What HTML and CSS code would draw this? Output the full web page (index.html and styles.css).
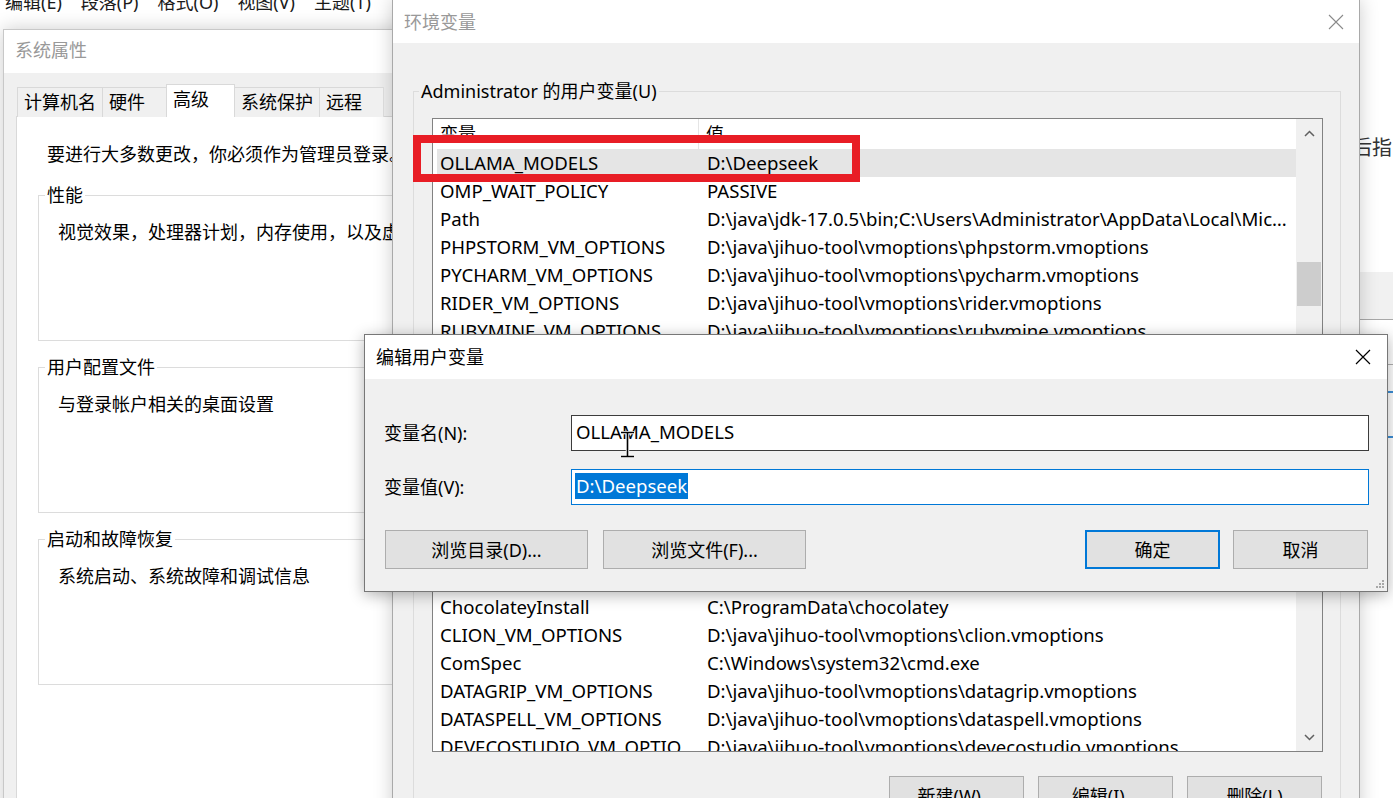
FILE: index.html
```
<!DOCTYPE html>
<html lang="zh-CN">

<head>
  <meta charset="UTF-8">
  <title>环境变量</title>
  <link rel="stylesheet" href="styles.css">
</head>

<body>
  <div class="desktop">

    <!-- editor app in the background -->
    <div class="menubar">
      <span>编辑(E)</span>
      <span>段落(P)</span>
      <span>格式(O)</span>
      <span>视图(V)</span>
      <span>主题(T)</span>
    </div>

    <div class="bg-app">
      <div class="bg-text">后指</div>
      <div class="bg-bar"></div>
      <div class="bg-line gray"></div>
      <div class="bg-line blue first"></div>
      <div class="bg-line blue"></div>
    </div>

    <!-- 系统属性 -->
    <div class="window sysprops">
      <div class="titlebar inactive"><span class="title">系统属性</span></div>
      <div class="sys-body">
        <div class="tabs">
          <div class="tab">计算机名</div>
          <div class="tab">硬件</div>
          <div class="tab active">高级</div>
          <div class="tab">系统保护</div>
          <div class="tab">远程</div>
        </div>
        <div class="tab-panel">
          <p class="note">要进行大多数更改，你必须作为管理员登录。</p>
          <fieldset class="sys-group">
            <legend>性能</legend>
            <p>视觉效果，处理器计划，内存使用，以及虚拟内存</p>
          </fieldset>
          <fieldset class="sys-group">
            <legend>用户配置文件</legend>
            <p>与登录帐户相关的桌面设置</p>
          </fieldset>
          <fieldset class="sys-group">
            <legend>启动和故障恢复</legend>
            <p>系统启动、系统故障和调试信息</p>
          </fieldset>
        </div>
      </div>
    </div>

    <!-- 环境变量 -->
    <div class="window envwin">
      <div class="titlebar inactive">
        <span class="title">环境变量</span>
        <span class="close"><svg width="16" height="16" viewBox="0 0 16 16"><path d="M1 1L15 15M15 1L1 15" stroke="currentColor" stroke-width="1.1" fill="none"/></svg></span>
      </div>
      <div class="env-body">
        <fieldset class="env-group">
          <legend>Administrator 的用户变量(U)</legend>
          <div class="listview user-list">
            <div class="list-main">
              <div class="list-head">
                <div class="hcell name">变量</div>
                <div class="hcell">值</div>
              </div>
              <div class="row selected"><span class="cell-name">OLLAMA_MODELS</span><span class="cell-value">D:\Deepseek</span></div>
              <div class="row"><span class="cell-name">OMP_WAIT_POLICY</span><span class="cell-value">PASSIVE</span></div>
              <div class="row"><span class="cell-name">Path</span><span class="cell-value">D:\java\jdk-17.0.5\bin;C:\Users\Administrator\AppData\Local\Microsoft\WindowsApps;</span></div>
              <div class="row"><span class="cell-name">PHPSTORM_VM_OPTIONS</span><span class="cell-value">D:\java\jihuo-tool\vmoptions\phpstorm.vmoptions</span></div>
              <div class="row"><span class="cell-name">PYCHARM_VM_OPTIONS</span><span class="cell-value">D:\java\jihuo-tool\vmoptions\pycharm.vmoptions</span></div>
              <div class="row"><span class="cell-name">RIDER_VM_OPTIONS</span><span class="cell-value">D:\java\jihuo-tool\vmoptions\rider.vmoptions</span></div>
              <div class="row"><span class="cell-name">RUBYMINE_VM_OPTIONS</span><span class="cell-value">D:\java\jihuo-tool\vmoptions\rubymine.vmoptions</span></div>
              <div class="row"><span class="cell-name">TEMP</span><span class="cell-value">%USERPROFILE%\AppData\Local\Temp</span></div>
            </div>
            <div class="vscroll">
              <div class="arrow"><svg width="11" height="7" viewBox="0 0 11 7"><path d="M1 6L5.5 1.5L10 6" stroke="#606060" stroke-width="1.5" fill="none"/></svg></div>
              <div class="thumb"></div>
              <div class="spacer"></div>
              <div class="arrow"><svg width="11" height="7" viewBox="0 0 11 7"><path d="M1 1L5.5 5.5L10 1" stroke="#606060" stroke-width="1.5" fill="none"/></svg></div>
            </div>
          </div>
          <div class="btn-row">
            <button class="btn">新建(N)...</button>
            <button class="btn">编辑(E)...</button>
            <button class="btn">删除(D)</button>
          </div>
        </fieldset>

        <fieldset class="env-group">
          <legend>系统变量(S)</legend>
          <div class="listview sys-list">
            <div class="list-main">
              <div class="list-head">
                <div class="hcell name">变量</div>
                <div class="hcell">值</div>
              </div>
              <div class="row"><span class="cell-name">ACSetupSvcPort</span><span class="cell-value">23210</span></div>
              <div class="row"><span class="cell-name">ACSvcPort</span><span class="cell-value">17532</span></div>
              <div class="row"><span class="cell-name">APPCODE_VM_OPTIONS</span><span class="cell-value">D:\java\jihuo-tool\vmoptions\appcode.vmoptions</span></div>
              <div class="row"><span class="cell-name">ChocolateyInstall</span><span class="cell-value">C:\ProgramData\chocolatey</span></div>
              <div class="row"><span class="cell-name">CLION_VM_OPTIONS</span><span class="cell-value">D:\java\jihuo-tool\vmoptions\clion.vmoptions</span></div>
              <div class="row"><span class="cell-name">ComSpec</span><span class="cell-value">C:\Windows\system32\cmd.exe</span></div>
              <div class="row"><span class="cell-name">DATAGRIP_VM_OPTIONS</span><span class="cell-value">D:\java\jihuo-tool\vmoptions\datagrip.vmoptions</span></div>
              <div class="row"><span class="cell-name">DATASPELL_VM_OPTIONS</span><span class="cell-value">D:\java\jihuo-tool\vmoptions\dataspell.vmoptions</span></div>
              <div class="row"><span class="cell-name">DEVECOSTUDIO_VM_OPTIONS</span><span class="cell-value">D:\java\jihuo-tool\vmoptions\devecostudio.vmoptions</span></div>
            </div>
            <div class="vscroll">
              <div class="arrow"><svg width="11" height="7" viewBox="0 0 11 7"><path d="M1 6L5.5 1.5L10 6" stroke="#606060" stroke-width="1.5" fill="none"/></svg></div>
              <div class="thumb"></div>
              <div class="spacer"></div>
              <div class="arrow"><svg width="11" height="7" viewBox="0 0 11 7"><path d="M1 1L5.5 5.5L10 1" stroke="#606060" stroke-width="1.5" fill="none"/></svg></div>
            </div>
          </div>
          <div class="btn-row">
            <button class="btn">新建(W)...</button>
            <button class="btn">编辑(I)...</button>
            <button class="btn">删除(L)</button>
          </div>
        </fieldset>
      </div>
    </div>

    <!-- red marker drawn over the screenshot -->
    <div class="annotation"></div>

    <!-- 编辑用户变量 -->
    <div class="window editdlg">
      <div class="titlebar">
        <span class="title">编辑用户变量</span>
        <span class="close"><svg width="16" height="16" viewBox="0 0 16 16"><path d="M1 1L15 15M15 1L1 15" stroke="currentColor" stroke-width="1.2" fill="none"/></svg></span>
      </div>
      <div class="edit-body">
        <div class="field">
          <label>变量名(N):</label>
          <div class="textbox">OLLAMA_MODELS</div>
        </div>
        <div class="field">
          <label>变量值(V):</label>
          <div class="textbox focused"><span class="sel">D:\Deepseek</span></div>
        </div>
        <div class="dlg-buttons">
          <button class="btn wide">浏览目录(D)...</button>
          <button class="btn wide">浏览文件(F)...</button>
          <span class="spacer"></span>
          <button class="btn default">确定</button>
          <button class="btn">取消</button>
        </div>
      </div>
      <svg class="grip" width="10" height="10" viewBox="0 0 10 10" fill="#a8a8a8">
        <rect x="8" y="2" width="2" height="2"/>
        <rect x="5" y="5" width="2" height="2"/>
        <rect x="8" y="5" width="2" height="2"/>
        <rect x="2" y="8" width="2" height="2"/>
        <rect x="5" y="8" width="2" height="2"/>
        <rect x="8" y="8" width="2" height="2"/>
      </svg>
    </div>

    <!-- mouse cursor -->
    <svg class="ibeam" width="15" height="27" viewBox="0 0 15 27">
      <path d="M1 1.5H14M7.5 1.5V25.5M1 25.5H14" stroke="#fff" stroke-width="3.4" fill="none"/>
      <path d="M1 1.5H14M7.5 1.5V25.5M1 25.5H14" stroke="#000" stroke-width="1.6" fill="none"/>
    </svg>

  </div>
</body>

</html>
```

FILE: styles.css
```
/* reset */
* {
  margin: 0;
  padding: 0;
  box-sizing: border-box;
}

body {
  font-family: "Noto Sans", "Noto Sans CJK SC", sans-serif;
  font-size: 18px;
  line-height: 24px;
  color: #000;
  background: #fff;
  overflow: hidden;
}

.desktop {
  position: relative;
  width: 1393px;
  height: 798px;
  overflow: hidden;
  background: #fff;
}

/* background editor */
.menubar {
  display: flex;
  gap: 19px;
  padding-left: 5px;
  margin-top: -10px;
  color: #1a1a1a;
}

.bg-app {
  position: absolute;
  left: 1352px;
  top: 0;
  width: 41px;
  height: 798px;
}

.bg-text {
  margin-top: 136px;
  font-size: 20px;
  color: #333;
}

.bg-bar {
  margin-top: 112px;
  height: 48px;
  background: #f1f1f1;
  border-bottom: 1px solid #a8a8a8;
}

.bg-line {
  height: 2px;
}

.bg-line.gray {
  margin-top: 44px;
  height: 1px;
  background: #b0b0b0;
}

.bg-line.blue {
  margin-top: 43px;
  background: #3c8ed6;
}

.bg-line.blue.first {
  margin-top: 26px;
}

/* windows */
.window {
  position: absolute;
  display: flex;
  flex-direction: column;
  background: #f0f0f0;
  border: 1px solid #a9a9a9;
  box-shadow: 0 0 18px rgba(0, 0, 0, 0.2);
}

.titlebar {
  height: 43px;
  flex-shrink: 0;
  display: flex;
  align-items: center;
  padding-left: 11px;
  background: #fff;
}

.titlebar.inactive .title {
  color: #999;
}

.close {
  margin-left: auto;
  width: 46px;
  display: flex;
  justify-content: center;
  color: #000;
}

.titlebar.inactive .close {
  color: #8a8a8a;
}

/* 系统属性 */
.sysprops {
  left: 3px;
  top: 29px;
  width: 480px;
  height: 800px;
  border-color: #c8c8c8;
}

.sysprops .titlebar {
  padding-bottom: 3px;
}

.sys-body {
  flex: 1;
  display: flex;
  flex-direction: column;
  padding: 12px 0 0 12px;
}

.tabs {
  display: flex;
  align-items: flex-end;
  height: 32px;
  margin-left: 1px;
  margin-bottom: -1px;
  position: relative;
  z-index: 1;
}

.tab {
  height: 30px;
  min-width: 65px;
  padding: 0 6px;
  margin-right: -1px;
  line-height: 28px;
  border: 1px solid #d9d9d9;
  border-bottom: none;
  background: #f0f0f0;
}

.tab.active {
  height: 33px;
  min-width: 69px;
  background: #fff;
}

.tab-panel {
  flex: 1;
  padding-top: 25px;
  background: #fff;
  border: 1px solid #d9d9d9;
  white-space: nowrap;
}

.note {
  margin-left: 30px;
}

.sys-group {
  width: 520px;
  height: 158px;
  margin: 17px 0 0 21px;
  padding: 13px 0 0 6px;
  border: 1px solid #dcdcdc;
}

.sys-group + .sys-group {
  margin-top: 14px;
}

.sys-group legend {
  padding: 0 2px;
}

.sys-group p {
  margin-left: 13px;
}

/* 环境变量 */
.envwin {
  left: 392px;
  top: -1px;
  width: 968px;
  height: 830px;
}

.env-body {
  padding: 36px 18px 0 20px;
}

.env-group {
  min-width: 0;
  padding: 15px 17px 12px 5px;
  border: 1px solid #dcdcdc;
}

.env-group + .env-group {
  margin-top: 6px;
}

.env-group legend {
  padding: 0 2px;
}

.listview {
  display: flex;
  margin-left: 13px;
  background: #fff;
  border: 1px solid #828282;
}

.user-list {
  height: 239px;
}

.sys-list {
  height: 274px;
}

.list-main {
  flex: 1;
  min-width: 0;
  overflow: hidden;
}

.list-head {
  display: flex;
  height: 30px;
}

.hcell {
  display: flex;
  align-items: center;
  padding-left: 7px;
}

.hcell.name {
  width: 266px;
  border-right: 1px solid #e5e5e5;
}

.row {
  display: flex;
  align-items: center;
  height: 28px;
  margin-left: 4px;
  font-size: 18.6px;
  white-space: nowrap;
}

.row.selected {
  background: #e5e5e5;
}

.cell-name {
  width: 270px;
  flex-shrink: 0;
  padding: 0 10px 0 3px;
  overflow: hidden;
  text-overflow: ellipsis;
}

.cell-value {
  flex: 1;
  min-width: 0;
  padding-right: 4px;
  overflow: hidden;
  text-overflow: ellipsis;
}

.vscroll {
  width: 26px;
  display: flex;
  flex-direction: column;
  align-items: center;
  background: #f0f0f0;
}

.arrow {
  width: 100%;
  height: 28px;
  flex-shrink: 0;
  display: flex;
  align-items: center;
  justify-content: center;
}

.thumb {
  width: 24px;
  height: 44px;
  background: #cdcdcd;
}

.user-list .thumb {
  margin-top: 115px;
}

.sys-list .thumb {
  margin-top: 20px;
}

.spacer {
  flex: 1;
}

.btn-row {
  display: flex;
  justify-content: flex-end;
  gap: 14px;
  margin-top: 24px;
  margin-right: 1px;
}

.btn {
  width: 135px;
  height: 39px;
  font: inherit;
  color: #000;
  background: #e1e1e1;
  border: 1px solid #adadad;
}

.btn.wide {
  width: 203px;
}

.btn.default {
  border: 2px solid #0078d7;
}

/* red marker */
.annotation {
  position: absolute;
  left: 413px;
  top: 135px;
  width: 447px;
  height: 47px;
  border: 8px solid #e81d25;
}

/* 编辑用户变量 */
.editdlg {
  left: 364px;
  top: 334px;
  width: 1024px;
  height: 258px;
  border-color: #777;
  box-shadow: 0 3px 14px rgba(0, 0, 0, 0.3);
}

.editdlg .titlebar {
  height: 44px;
  padding-right: 1px;
}

.edit-body {
  padding: 36px 18px 0 19px;
}

.field {
  display: grid;
  grid-template-columns: 187px 1fr;
  align-items: center;
}

.field + .field {
  margin-top: 18px;
}

.textbox {
  height: 36px;
  display: flex;
  align-items: center;
  padding: 0 0 3px 4px;
  font-size: 18.6px;
  white-space: nowrap;
  background: #fff;
  border: 1px solid #3c3c3c;
}

.textbox.focused {
  padding-left: 3px;
  border-color: #0078d7;
}

.sel {
  padding: 0 1px;
  line-height: 26px;
  color: #fff;
  background: #0078d7;
}

.dlg-buttons {
  display: flex;
  gap: 15px;
  margin-top: 25px;
  padding: 0 1px;
}

.dlg-buttons .btn.default {
  margin-right: -2px;
}

.grip {
  position: absolute;
  right: 3px;
  bottom: 3px;
}

.ibeam {
  position: absolute;
  left: 620px;
  top: 431px;
}
```
